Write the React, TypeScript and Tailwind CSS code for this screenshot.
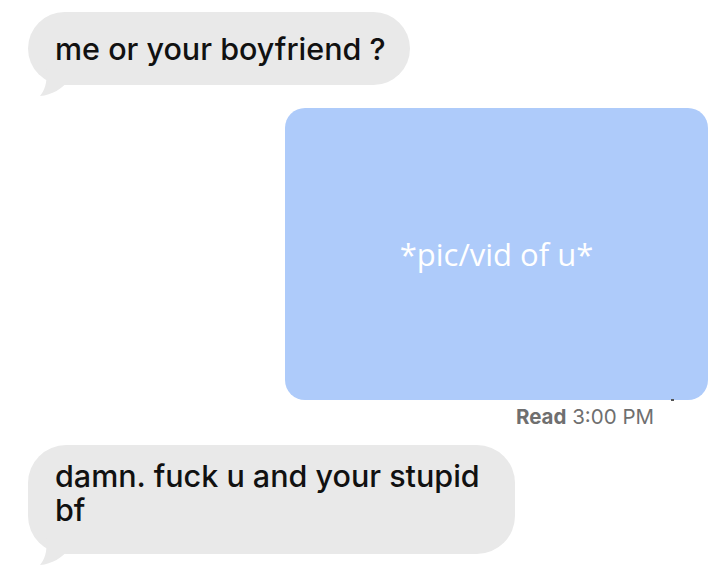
import React from "react";

function Tail() {
  return (
    <svg
      className="absolute left-[12px] bottom-[-14px]"
      width="40"
      height="30"
      viewBox="0 0 40 30"
    >
      <path d="M6 0 C 8 14, 4 22, 0 27 C 12 26, 22 20, 30 10 L 30 0 Z" fill="#e9e9e9" />
    </svg>
  );
}

export default function App() {
  return (
    <div
      className="w-[720px] h-[586px] bg-white flex flex-col overflow-hidden"
      style={{ fontFamily: "Inter, 'Liberation Sans', sans-serif" }}
    >
      <div className="relative ml-[28px] mt-[12px] w-[382px] h-[73px] rounded-[37px] bg-[#e9e9e9] flex items-center pl-[27px]">
        <Tail />
        <span className="relative text-[30.5px] font-medium text-[#111] whitespace-nowrap">
          me or your boyfriend ?
        </span>
      </div>

      <div className="self-end mr-[12px] mt-[23px] w-[423px] h-[292px] rounded-[20px] bg-[#aecbfa] flex items-center justify-center">
        <span
          className="text-white text-[31px]"
          style={{ fontFamily: "'Open Sans', sans-serif" }}
        >
          *pic/vid of u*
        </span>
      </div>

      <div className="self-end mr-[66px] mt-[3px] text-[20.5px] text-[#6f6f6f] leading-[28px] relative">
        <span className="font-bold">Read</span> 3:00 PM
        <span className="absolute right-[-20px] top-[-4px] w-[3px] h-[2px] bg-[#555]" />
      </div>

      <div className="relative ml-[28px] mt-[14px] w-[487px] h-[109px] rounded-[38px] bg-[#e9e9e9] pl-[27px] pt-[14px]">
        <Tail />
        <p className="relative text-[30.5px] font-medium text-[#111] leading-[34px] whitespace-nowrap">
          damn. fuck u and your stupid
          <br />
          bf
        </p>
      </div>
    </div>
  );
}
